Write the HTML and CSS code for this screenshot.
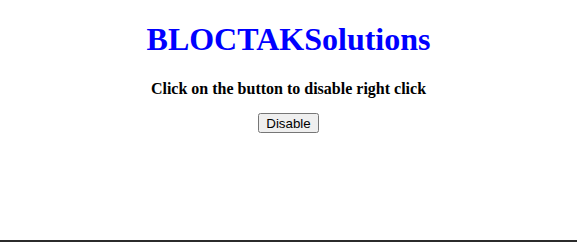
FILE: index.html
```html
<!DOCTYPE html>
<html>
<head>
<meta charset="utf-8">
<link rel="stylesheet" href="styles.css">
</head>
<body>
<div class="page">
<h1 class="title">BLOCTAKSolutions</h1>
<h4 class="subtitle">Click on the button to disable right click</h4>
<button class="btn">Disable</button>
</div>
</body>
</html>
```
FILE: styles.css
```css
html, body {
  margin: 0;
  padding: 0;
}
.page {
  box-sizing: border-box;
  min-height: 100vh;
  padding: 0.02px 8px;
  border-bottom: 2px solid #2b2b2b;
  text-align: center;
  font-family: "Liberation Serif", "Times New Roman", serif;
}
.title {
  color: blue;
  font-size: 32px;
  margin: 21.44px 0;
}
.subtitle {
  font-size: 16px;
  margin: 20px 0 15px;
}
.btn {
  font-family: "Liberation Sans", Arial, sans-serif;
  font-size: 13.33px;
  padding: 1px 6px;
  height: 20px;
}
```
